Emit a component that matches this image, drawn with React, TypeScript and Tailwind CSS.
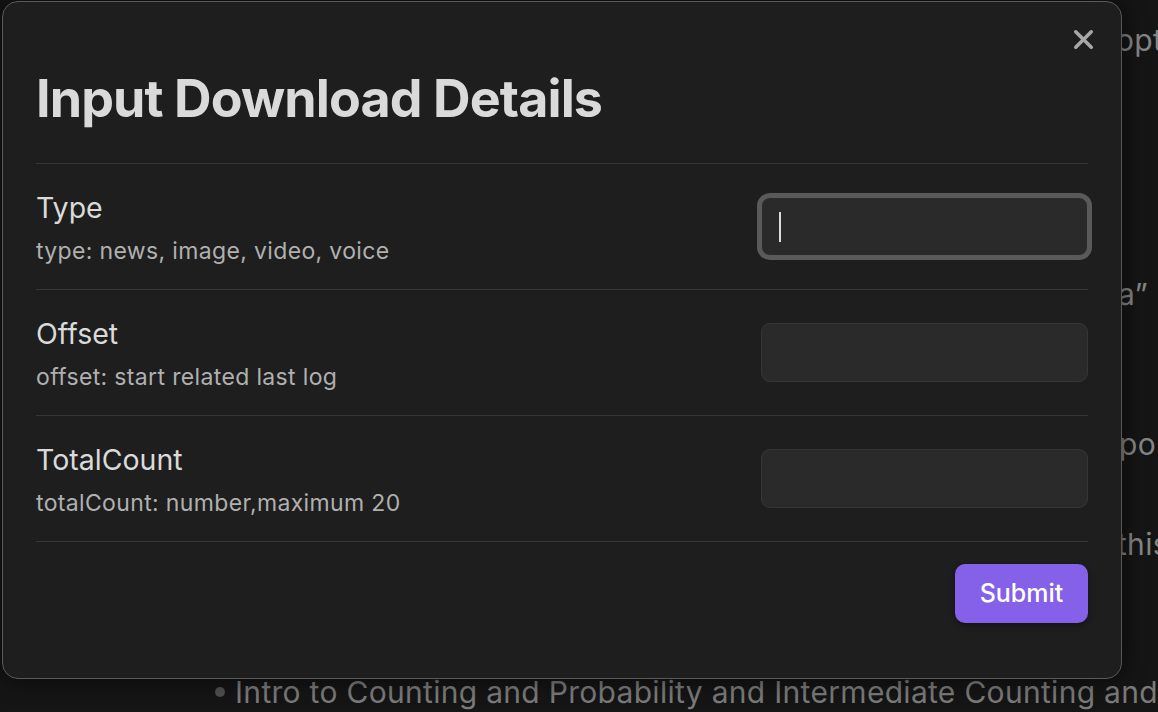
import { X } from "lucide-react";

const rows = [
  { name: "Type", desc: "type: news, image, video, voice", focused: true },
  { name: "Offset", desc: "offset: start related last log", focused: false },
  { name: "TotalCount", desc: "totalCount: number,maximum 20", focused: false },
];

function SettingRow({ name, desc, focused }: { name: string; desc: string; focused: boolean }) {
  return (
    <div className="flex h-[126px] items-center justify-between border-t border-[#363636]">
      <div className="flex flex-col pt-[2px]">
        <div className="text-[28.5px] leading-[34px] text-[#dadada]">{name}</div>
        <div className="mt-[12px] text-[23px] leading-[28px] tracking-[0.35px] text-[#b0b0b0]">{desc}</div>
      </div>
      <div className="relative">
        <input
          type="text"
          className={
            focused
              ? "h-[59px] w-[327px] rounded-[9px] border border-[#5a5a5a] bg-[#2a2a2a] shadow-[0_0_0_4px_#5a5a5a] outline-none caret-transparent"
              : "h-[59px] w-[327px] rounded-[9px] border border-[#363636] bg-[#2a2a2a] outline-none"
          }
        />
        {focused && (
          <span className="pointer-events-none absolute left-[18px] top-[15px] h-[30px] w-[2px] bg-[#dcdcdc]" />
        )}
      </div>
    </div>
  );
}

export default function App() {
  return (
    <div
      className="relative h-[712px] w-[1158px] overflow-hidden bg-[#151515] text-[#858585]"
      style={{ fontFamily: "Inter, 'Noto Sans', sans-serif" }}
    >
      {/* page text behind the modal */}
      <div className="absolute left-[1116px] top-[22px] whitespace-nowrap text-[30px] leading-[36px] tracking-[0.3px]">opt</div>
      <div className="absolute left-[1118px] top-[276px] whitespace-nowrap text-[30px] leading-[36px] tracking-[0.3px]">a”</div>
      <div className="absolute left-[1119px] top-[426px] whitespace-nowrap text-[30px] leading-[36px] tracking-[0.3px]">po</div>
      <div className="absolute left-[1117px] top-[526px] whitespace-nowrap text-[30px] leading-[36px] tracking-[0.3px]">this</div>
      <div className="absolute left-[215px] top-[674px] flex items-center whitespace-nowrap text-[30px] leading-[36px] tracking-[0.3px] text-[#7a7a7a]">
        <span className="mr-[10px] h-[10px] w-[10px] rounded-full bg-[#505050]" />
        Intro to Counting and Probability and Intermediate Counting and
      </div>

      {/* modal */}
      <div className="absolute left-[2px] top-[1px] flex h-[678px] w-[1120px] flex-col rounded-[16px] border border-[#595959] bg-[#1e1e1e] px-[33px] pt-[66px] shadow-[0_0_24px_rgba(0,0,0,0.6)]">
        <button className="absolute right-[22px] top-[22px] text-[#a8a8a8]">
          <X size={31} strokeWidth={2.7} />
        </button>

        <h1 className="mb-[33px] text-[52px] font-bold leading-[62px] tracking-[-0.9px] text-[#dadada]">
          Input Download Details
        </h1>

        {rows.map((r) => (
          <SettingRow key={r.name} {...r} />
        ))}

        <div className="flex justify-end border-t border-[#363636] pt-[22px]">
          <button className="h-[59px] w-[133px] rounded-[10px] bg-[#8560e8] text-[25px] font-medium text-white shadow-[0_2px_6px_rgba(0,0,0,0.4)]">
            Submit
          </button>
        </div>
      </div>
    </div>
  );
}
